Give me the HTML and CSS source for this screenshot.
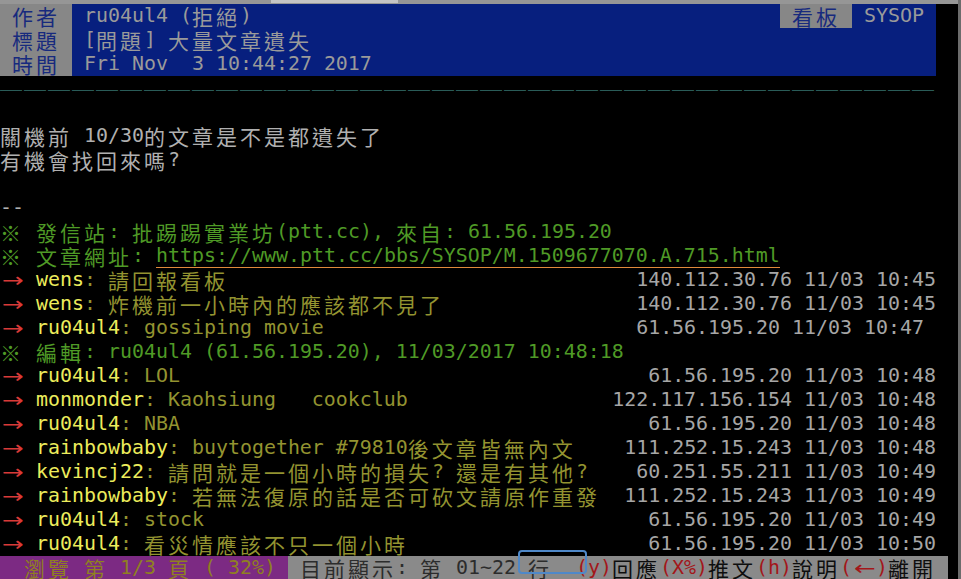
FILE: index.html
```html
<!DOCTYPE html>
<html lang="zh-Hant">

<head>
    <meta charset="UTF-8">
    <meta name="viewport" content="width=device-width, initial-scale=1.0">
    <title>[問題] 大量文章遺失 - SYSOP</title>
    <link rel="stylesheet" href="styles.css">
</head>

<body>
    <div class="window">
        <!-- window chrome strip -->
        <div class="topbar"><div class="topbar-tab"></div></div>

        <div class="term">
            <!-- article header -->
            <div class="line head">
                <span class="label c">作者</span>
                <div class="hval"><span>ru04ul4 (</span><span class="c">拒絕</span><span>)</span></div>
                <span class="label c">看板</span>
                <div class="hval board"><span>SYSOP</span></div>
            </div>
            <div class="line head">
                <span class="label c">標題</span>
                <div class="hval"><span>[</span><span class="c">問題</span><span>] </span><span class="c">大量文章遺失</span></div>
            </div>
            <div class="line head">
                <span class="label c">時間</span>
                <div class="hval"><span>Fri Nov  3 10:44:27 2017</span></div>
            </div>
            <div class="line rule"><span class="c">───────────────────────────────────────</span></div>

            <!-- body -->
            <div class="line"></div>
            <div class="line body"><span class="c">關機前</span><span> 10/30</span><span class="c">的文章是不是都遺失了</span></div>
            <div class="line body"><span class="c">有機會找回來嗎</span><span>?</span></div>
            <div class="line"></div>
            <div class="line body"><span>--</span></div>
            <div class="line green"><span class="amb">※</span><span> </span><span class="c">發信站</span><span>: </span><span class="c">批踢踢實業坊</span><span>(ptt.cc), </span><span class="c">來自</span><span>: 61.56.195.20</span></div>
            <div class="line green"><span class="amb">※</span><span> </span><span class="c">文章網址</span><span>: </span><span class="url">https://www.ptt.cc/bbs/SYSOP/M.1509677070.A.715.html</span></div>

            <!-- pushes -->
            <div class="line push">
                <span class="arrow">→</span><span> </span><span class="user">wens</span><span class="msg">: </span><span class="msg c">請回報看板</span>
                <span class="ip">140.112.30.76 11/03 10:45</span>
            </div>
            <div class="line push">
                <span class="arrow">→</span><span> </span><span class="user">wens</span><span class="msg">: </span><span class="msg c">炸機前一小時內的應該都不見了</span>
                <span class="ip">140.112.30.76 11/03 10:45</span>
            </div>
            <div class="line push">
                <span class="arrow">→</span><span> </span><span class="user">ru04ul4</span><span class="msg">: gossiping movie</span>
                <span class="ip">61.56.195.20 11/03 10:47 </span>
            </div>
            <div class="line green"><span class="amb">※</span><span> </span><span class="c">編輯</span><span>: ru04ul4 (61.56.195.20), 11/03/2017 10:48:18</span></div>
            <div class="line push">
                <span class="arrow">→</span><span> </span><span class="user">ru04ul4</span><span class="msg">: LOL</span>
                <span class="ip">61.56.195.20 11/03 10:48</span>
            </div>
            <div class="line push">
                <span class="arrow">→</span><span> </span><span class="user">monmonder</span><span class="msg">: Kaohsiung   cookclub</span>
                <span class="ip">122.117.156.154 11/03 10:48</span>
            </div>
            <div class="line push">
                <span class="arrow">→</span><span> </span><span class="user">ru04ul4</span><span class="msg">: NBA</span>
                <span class="ip">61.56.195.20 11/03 10:48</span>
            </div>
            <div class="line push">
                <span class="arrow">→</span><span> </span><span class="user">rainbowbaby</span><span class="msg">: buytogether #79810</span><span class="msg c">後文章皆無內文</span>
                <span class="ip">111.252.15.243 11/03 10:48</span>
            </div>
            <div class="line push">
                <span class="arrow">→</span><span> </span><span class="user">kevincj22</span><span class="msg">: </span><span class="msg c">請問就是一個小時的損失</span><span class="msg">? </span><span class="msg c">還是有其他</span><span class="msg">?</span>
                <span class="ip">60.251.55.211 11/03 10:49</span>
            </div>
            <div class="line push">
                <span class="arrow">→</span><span> </span><span class="user">rainbowbaby</span><span class="msg">: </span><span class="msg c">若無法復原的話是否可砍文請原作重發</span>
                <span class="ip">111.252.15.243 11/03 10:49</span>
            </div>
            <div class="line push">
                <span class="arrow">→</span><span> </span><span class="user">ru04ul4</span><span class="msg">: stock</span>
                <span class="ip">61.56.195.20 11/03 10:49</span>
            </div>
            <div class="line push">
                <span class="arrow">→</span><span> </span><span class="user">ru04ul4</span><span class="msg">: </span><span class="msg c">看災情應該不只一個小時</span>
                <span class="ip">61.56.195.20 11/03 10:50</span>
            </div>

            <!-- status bar -->
            <div class="line status">
                <div class="seg-page">
                    <span>  </span><span class="c">瀏覽</span><span> </span><span class="c">第</span><span> 1/3 </span><span class="c">頁</span><span> ( 32%) </span>
                </div>
                <div class="seg-keys">
                    <span> </span><span class="c">目前顯示</span><span>: </span><span class="c">第</span><span> 01~22 </span><span class="c">行</span><span>  </span>
                    <span class="key">(y)</span><span class="c cmd">回應</span>
                    <span class="key">(X%)</span><span class="c cmd">推文</span>
                    <span class="key">(h)</span><span class="c cmd">說明</span>
                    <span class="key">(</span><span class="arrow key">←</span><span class="key">)</span><span class="c cmd">離開</span>
                </div>
            </div>

            <!-- input method cursor box -->
            <div class="ime-box"></div>
        </div>
    </div>
</body>

</html>
```

FILE: styles.css
```css
body {
    margin: 0;
    padding: 0;
    background: #000;
    overflow: hidden;
}

.window {
    width: 958px;
    height: 579px;
    border-right: 3px solid #6c6c6c;
    background: #000;
}

.topbar {
    height: 4px;
    background: #969696;
}

.topbar-tab {
    width: 127px;
    height: 3px;
    margin-left: 271px;
    background: #c4c4c4;
}

.term {
    position: relative;
    font-family: "DejaVu Sans Mono", "Noto Sans CJK TC", monospace;
    font-size: 19.93px;
    color: #b0b0b0;
}

.line {
    display: flex;
    height: 24px;
    width: 936px;
}

.line span {
    white-space: pre;
    line-height: 24px;
}

/* full width text: 2 columns per glyph */
.c {
    font-family: "Noto Sans CJK TC", sans-serif;
    font-size: 21px;
    letter-spacing: 3px;
}

/* ambiguous width symbols drawn in a 2-column cell */
.amb {
    flex: none;
    width: 24px;
    font-family: "Noto Sans CJK TC", sans-serif;
    font-size: 21px;
}

/* header */
.head .label {
    flex: none;
    width: 72px;
    padding-left: 12px;
    box-sizing: border-box;
    background: #878787;
    color: #172a7e;
}

.hval {
    display: flex;
    flex: 1;
    padding-left: 12px;
    background: #071f7e;
    color: #9a9a9a;
}

.hval.board {
    flex: none;
    width: 84px;
    box-sizing: border-box;
}

.rule {
    color: #2a5c58;
}

.rule .c {
    font-size: 22px;
    letter-spacing: 2px;
}

.body {
    color: #b0b0b0;
}

.green {
    color: #4f9a26;
}

.url {
    box-shadow: inset 0 -1px 0 #e08a3c;
}

/* push lines */
.arrow {
    flex: none;
    width: 22px;
    padding-left: 2px;
    font-family: "DejaVu Sans", sans-serif;
    font-size: 20px;
    color: #d83a38;
    transform: scaleX(1.3);
    transform-origin: 2px 50%;
}

.user {
    color: #ecec5c;
}

.msg {
    color: #939330;
}

.ip {
    margin-left: auto;
    color: #a6a6a6;
}

/* status bar */
.status {
    width: 948px;
}

.seg-page {
    display: flex;
    flex: none;
    width: 288px;
    background: #7c2a83;
    color: #8f7f22;
}

.seg-keys {
    display: flex;
    flex: 1;
    background: #8a8a8a;
    color: #2c2c2c;
}

.seg-keys .key {
    color: #a3171a;
}

.seg-keys .cmd {
    color: #0e0e0e;
}

.ime-box {
    position: absolute;
    left: 518px;
    top: 546px;
    width: 65px;
    height: 20px;
    border: 2px solid #4f88c8;
    border-radius: 4px;
}
```
